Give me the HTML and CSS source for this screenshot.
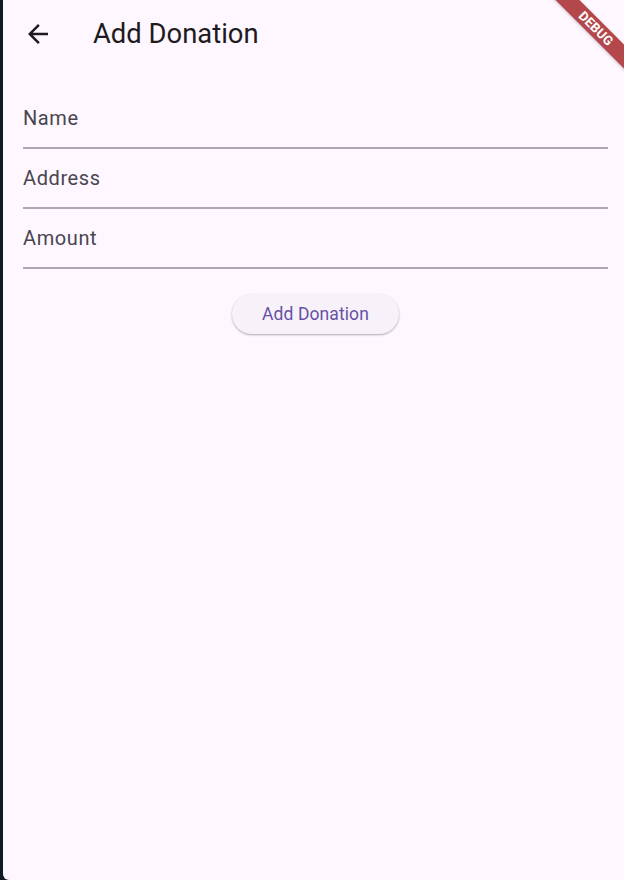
FILE: index.html
```html
<!DOCTYPE html>
<html>
<head>
<meta charset="utf-8">
<link rel="stylesheet" href="styles.css">
</head>
<body>
<div class="strip"></div>
<div class="app">
  <header class="appbar">
    <svg class="back" viewBox="0 0 24 24" width="30" height="30"><path d="M20 11H7.83l5.59-5.59L12 4l-8 8 8 8 1.41-1.41L7.83 13H20v-2z" fill="#1D1B20"/></svg>
    <h1 class="title">Add Donation</h1>
  </header>
  <main class="form">
    <div class="field"><span class="label">Name</span></div>
    <div class="field"><span class="label">Address</span></div>
    <div class="field"><span class="label">Amount</span></div>
    <div class="actions"><button class="btn">Add Donation</button></div>
  </main>
  <div class="banner">DEBUG</div>
</div>
</body>
</html>
```
FILE: styles.css
```css
html, body {
  margin: 0;
  height: 100%;
}
body {
  display: flex;
  background: #0f1a25;
  overflow: hidden;
  font-family: Roboto, "Noto Sans", sans-serif;
}
.strip {
  width: 3px;
  flex: none;
}
.app {
  flex: 1;
  position: relative;
  background: #fef7ff;
  border-bottom-left-radius: 6px;
  overflow: hidden;
}
.appbar {
  height: 67px;
  display: flex;
  align-items: center;
  padding-left: 20px;
}
.back {
  display: block;
  flex: none;
}
.title {
  margin: 0 0 0 40px;
  font-size: 27.4px;
  font-weight: 400;
  color: #1d1b20;
  line-height: normal;
}
.form {
  padding: 22px 16px 0 20px;
}
.field {
  height: 60px;
  box-sizing: border-box;
  padding-top: 17px;
  border-bottom: 2px solid #ada7b1;
}
.label {
  display: block;
  font-size: 20px;
  line-height: 24px;
  color: #49454f;
  letter-spacing: 0.6px;
}
.actions {
  display: flex;
  justify-content: center;
  margin-top: 25px;
}
.btn {
  width: 167px;
  height: 40px;
  border: none;
  border-radius: 20px;
  background: #f7f2fa;
  color: #6750a4;
  font-family: Roboto, sans-serif;
  font-size: 17.5px;
  font-weight: 400;
  letter-spacing: 0.1px;
  box-shadow: 0 1px 2px rgba(0,0,0,0.25), 0 1px 3px rgba(0,0,0,0.08);
  padding: 0;
}
.banner {
  position: absolute;
  left: 531px;
  top: 20px;
  width: 124px;
  height: 17px;
  transform: rotate(45deg);
  background: #b3474b;
  color: #fff;
  font-family: Roboto, sans-serif;
  font-weight: 700;
  font-size: 13px;
  line-height: 17px;
  text-align: center;
  letter-spacing: 0.2px;
  box-shadow: 0 1px 3px rgba(0,0,0,0.2);
}
```
